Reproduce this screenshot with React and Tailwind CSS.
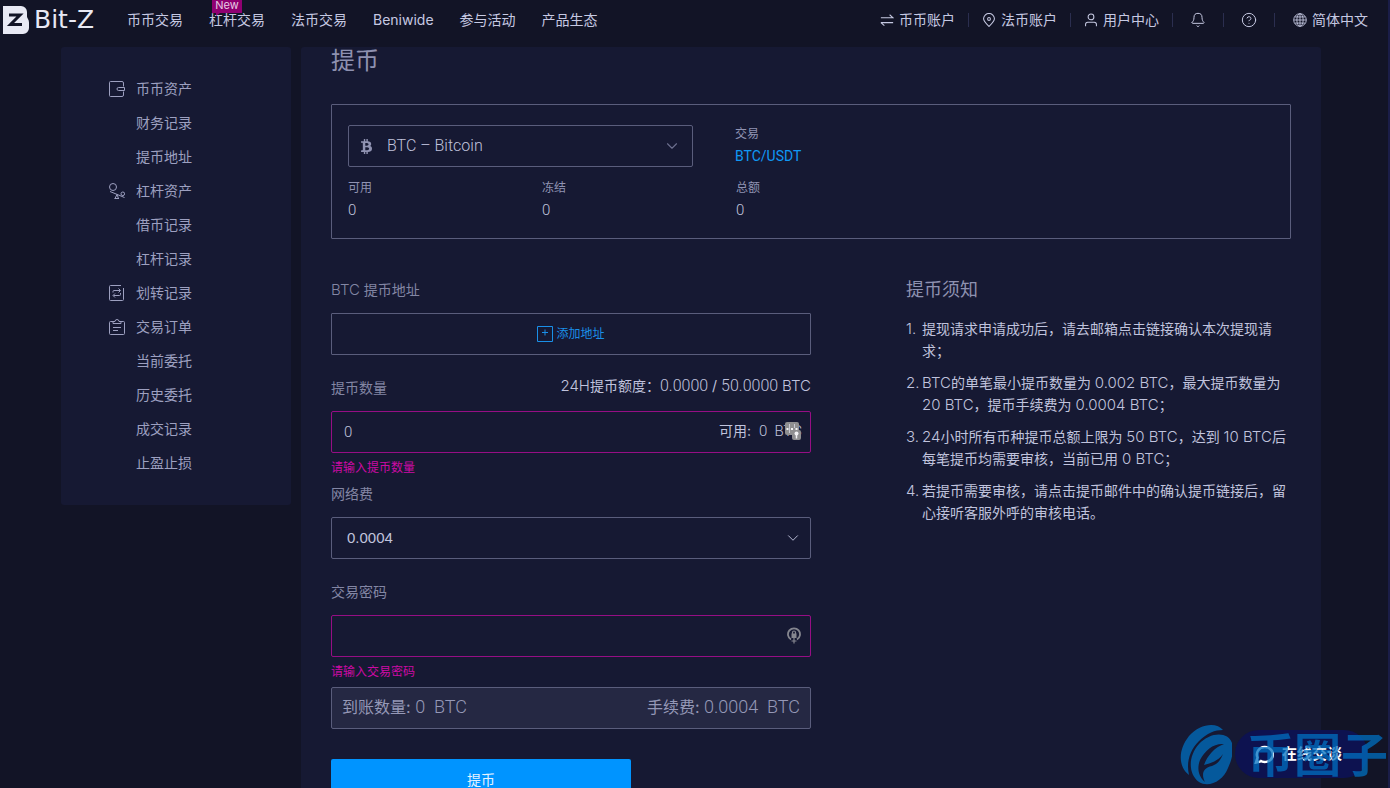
import React, { useState } from 'react';
import { Bell, ChevronDown, CircleQuestionMark } from 'lucide-react';
import { FaBtc } from 'react-icons/fa';

const NAV_LINKS = [
  { label: '币币交易' },
  { label: '杠杆交易', badge: 'New' },
  { label: '法币交易' },
  { label: 'Beniwide' },
  { label: '参与活动' },
  { label: '产品生态' },
];

const SIDE_LINKS = [
  { label: '币币资产', icon: WalletIcon },
  { label: '财务记录' },
  { label: '提币地址' },
  { label: '杠杆资产', icon: LeverIcon },
  { label: '借币记录' },
  { label: '杠杆记录' },
  { label: '划转记录', icon: TransferIcon },
  { label: '交易订单', icon: OrderIcon },
  { label: '当前委托' },
  { label: '历史委托' },
  { label: '成交记录' },
  { label: '止盈止损' },
];

const NOTES = [
  '提现请求申请成功后，请去邮箱点击链接确认本次提现请求；',
  'BTC的单笔最小提币数量为 0.002 BTC，最大提币数量为 20 BTC，提币手续费为 0.0004 BTC；',
  '24小时所有币种提币总额上限为 50 BTC，达到 10 BTC后每笔提币均需要审核，当前已用 0 BTC；',
  '若提币需要审核，请点击提币邮件中的确认提币链接后，留心接听客服外呼的审核电话。',
];

const NUMERIC = "font-light font-['Roboto','Noto_Sans_CJK_SC',sans-serif]";

// Latin runs are set lighter and one pixel larger than the Chinese text around them
function Mixed({ children }) {
  return children.split(/([A-Za-z0-9][A-Za-z0-9. ]*[A-Za-z0-9.]|[0-9])/).map((part, i) =>
    i % 2 ? <span key={i} className="text-[15px] font-light">{part}</span> : part
  );
}

function Icon({ size = 16, className = '', children }) {
  return (
    <svg width={size} height={size} viewBox="0 0 16 16" fill="none" stroke="currentColor" strokeWidth="1" className={`shrink-0 ${className}`} aria-hidden="true">
      {children}
    </svg>
  );
}

function WalletIcon() {
  return (
    <Icon>
      <path d="M14.5 5.5V2a1.5 1.5 0 0 0-1.5-1.5H1.5a1 1 0 0 0-1 1v13a1 1 0 0 0 1 1H13a1.5 1.5 0 0 0 1.500-1.500V10.500" />
      <path d="M9.500 6.500H15.500V9.500H9.500A1.500 1.500 0 0 1 9.500 6.500Z" />
    </Icon>
  );
}

function LeverIcon() {
  return (
    <Icon>
      <circle cx="4" cy="4" r="3.500" />
      <circle cx="13.800" cy="10.800" r="1.800" />
      <path d="M1 8.500 15.500 14.500M8 11.500 6 15.500M8 11.500 9.500 15.500M5.500 15.500H10" />
    </Icon>
  );
}

function TransferIcon() {
  return (
    <Icon>
      <path d="M12 .5H1.500a1 1 0 0 0-1 1v13a1 1 0 0 0 1 1h12a1 1 0 0 0 1-1V3" />
      <path d="M4 7.500V6.500a1 1 0 0 1 1-1h6M9.500 3.500l2 2-2 2M11.500 8v1.500a1 1 0 0 1-1 1H4.500M6 8.500l-2 2 2 2" />
    </Icon>
  );
}

function OrderIcon() {
  return (
    <Icon>
      <path d="M4 2.500H1.500a1 1 0 0 0-1 1v11a1 1 0 0 0 1 1h13a1 1 0 0 0 1-1v-11a1 1 0 0 0-1-1H12" />
      <path d="M4 4.500v-2h2a2 2 0 0 1 4 0h2v2ZM4 8.500h8M4 11.500h5" />
    </Icon>
  );
}

function SwapIcon() {
  return (
    <Icon size={14}>
      <path strokeWidth="1.200" d="M1 5.500H15L11 2M1 11H15M1 11l4 3.500" />
    </Icon>
  );
}

function PinIcon() {
  return (
    <Icon size={14}>
      <path strokeWidth="1.200" d="M8 15.300C4 11.500 1.800 9.500 1.800 6.700a6.200 6.200 0 0 1 12.400 0c0 2.800-2.200 4.800-6.200 8.600Z" />
      <circle cx="8" cy="6.800" r="1.600" strokeWidth="1.200" />
    </Icon>
  );
}

function UserIcon() {
  return (
    <Icon size={14}>
      <circle cx="8" cy="4.500" r="3.300" strokeWidth="1.200" />
      <path strokeWidth="1.200" d="M1.800 15v-2a2.500 2.500 0 0 1 2.500-2.500h7.400a2.500 2.500 0 0 1 2.500 2.500v2" />
    </Icon>
  );
}

function GlobeIcon() {
  return (
    <Icon size={14}>
      <circle cx="8" cy="8" r="7.200" />
      <ellipse cx="8" cy="8" rx="3.600" ry="7.200" />
      <path d="M8 1v14M1 8h14M2 4.500h12M2 11.500h12" />
    </Icon>
  );
}

function Logo() {
  return (
    <a href="#" className="flex items-center gap-[5px] text-[#e8e9f4]" aria-label="Bit-Z">
      <svg width="26" height="28" viewBox="0 0 26 28" aria-hidden="true">
        <path fill="currentColor" d="M0 0H18a6 6 0 0 1 6 6v4.500c0 1.500 2 3 2 6V22a6 6 0 0 1-6 6H0Z" />
        <path fill="none" stroke="#121426" strokeWidth="3" d="M6 9H17L7.500 18.500H19" />
      </svg>
      <span className="text-[25px] leading-[28px] font-['DejaVu_Sans',sans-serif]">Bit-Z</span>
    </a>
  );
}

function Divider() {
  return <span className="w-px h-[14px] bg-[#2b2e4f]" />;
}

function Header() {
  return (
    <header className="h-[47px] pb-[7px] pl-[3px] pr-5 flex items-center text-[#c6c9e2]">
      <div className="w-[124px]">
        <Logo />
      </div>
      <nav className="flex items-center gap-[26px]">
        {NAV_LINKS.map((link) => (
          <a key={link.label} href="#" className="relative whitespace-nowrap">
            {link.label}
            {link.badge && (
              <span className="absolute -top-[10px] left-[3px] h-[13px] w-[30px] bg-[#8f0071] text-center text-[11px] leading-[11px] text-[#e7cbe4]">
                {link.badge}
                <span className="absolute left-[4px] top-full border-t-[3px] border-r-[4px] border-t-[#8f0071] border-r-transparent" />
              </span>
            )}
          </a>
        ))}
      </nav>
      <div className="ml-auto flex items-center whitespace-nowrap">
        <a href="#" className="flex items-center gap-[5px] px-[13px]"><SwapIcon />币币账户</a>
        <Divider />
        <a href="#" className="flex items-center gap-[5px] px-[13px]"><PinIcon />法币账户</a>
        <Divider />
        <a href="#" className="flex items-center gap-[5px] px-[13px]"><UserIcon />用户中心</a>
        <Divider />
        <button type="button" aria-label="消息" className="px-[17px]"><Bell size={16} strokeWidth={1.5} /></button>
        <Divider />
        <button type="button" aria-label="帮助" className="px-[17px]"><CircleQuestionMark size={16} strokeWidth={1.5} /></button>
        <Divider />
        <a href="#" className="flex items-center gap-[5px] pl-[18px]"><GlobeIcon />简体中文</a>
      </div>
    </header>
  );
}

function Sidebar() {
  return (
    <aside className="w-[230px] shrink-0 rounded-[3px] bg-[#161933] py-[25px] pl-[48px] text-[#9da0c0]">
      {SIDE_LINKS.map(({ label, icon: LinkIcon }) => (
        <a key={label} href="#" className="flex h-[34px] items-center gap-[11px]">
          <span className="w-4">{LinkIcon && <LinkIcon />}</span>
          {label}
        </a>
      ))}
    </aside>
  );
}

function Stat({ label, value }) {
  return (
    <div className="w-[194px]">
      <div className="text-xs leading-[22px] text-[#9093b2]">{label}</div>
      <div className={`text-[15px] leading-[22px] ${NUMERIC}`}>{value}</div>
    </div>
  );
}

function CoinCard() {
  return (
    <section className="rounded-[1px] border border-[#5a5d7c] px-4 pt-[18px] pb-[17px]">
      <div className="flex items-end gap-[42px]">
        <div className="relative w-[345px]">
          <FaBtc size={15} className="absolute left-[11px] top-[14px] text-[#9093b2]" />
          <select aria-label="币种" className={`block h-[42px] w-full appearance-none rounded-[2px] border border-[#5a5d7c] bg-transparent pl-[38px] pr-10 text-base ${NUMERIC}`}>
            <option>BTC – Bitcoin</option>
          </select>
          <ChevronDown size={18} strokeWidth={1.5} className="pointer-events-none absolute right-[12px] top-[12px] text-[#6c6f8e]" />
        </div>
        <div>
          <div className="text-xs leading-[22px] text-[#9093b2]">交易</div>
          <a href="#" className="block font-['Roboto',sans-serif] leading-[22px] text-[#1098f5]">BTC/USDT</a>
        </div>
      </div>
      <div className="mt-[10px] flex">
        <Stat label="可用" value="0" />
        <Stat label="冻结" value="0" />
        <Stat label="总额" value="0" />
      </div>
    </section>
  );
}

function FieldLabel({ htmlFor, children }) {
  return <label htmlFor={htmlFor} className="block leading-[22px] text-[#8386a4]"><Mixed>{children}</Mixed></label>;
}

function FieldError({ children }) {
  return <p className="my-1 text-xs leading-[22px] text-[#cc0aa4]">{children}</p>;
}

// Badges that a password manager puts into the text boxes
function KeypadBadge() {
  return (
    <svg width="17" height="19" viewBox="0 0 17 19" className="absolute right-[9px] top-[11px]" aria-hidden="true">
      <rect x="0" y="0" width="14" height="13" rx="2" fill="#8f8f91" />
      <rect x="7" y="8" width="9" height="10" rx="2" fill="#8f8f91" />
      <path d="M1.500 7h2M6 7h2M10.500 7h2" stroke="#f2f2f4" strokeWidth="2" />
      <path d="M4.500 2v9M9.500 2v4" stroke="#c9c9d2" strokeWidth="1" />
      <circle cx="11.500" cy="11.500" r="2" fill="#f2f2f4" />
      <path d="M11.500 12v4.500" stroke="#f2f2f4" strokeWidth="1.500" />
    </svg>
  );
}

function LockBadge() {
  return (
    <svg width="14" height="17" viewBox="0 0 14 17" fill="none" stroke="#85868f" className="absolute right-[10px] top-[12px]" aria-hidden="true">
      <path strokeWidth="1.800" d="M4 12.500A6 6 0 1 1 10 12.500" />
      <rect x="4.500" y="6.500" width="5" height="4.500" fill="#85868f" stroke="none" />
      <path strokeWidth="1.200" d="M5.500 7V5.500a1.500 1.500 0 0 1 3 0V7M7 11v5.500M4.500 14h5" />
    </svg>
  );
}

function WithdrawForm() {
  const [amount, setAmount] = useState('0');
  const [password, setPassword] = useState('');

  return (
    <form className="w-[480px]" onSubmit={(e) => e.preventDefault()}>
      <FieldLabel htmlFor="address">BTC 提币地址</FieldLabel>
      <button id="address" type="button" className="mt-3 mb-[22px] flex h-[42px] w-full items-center justify-center gap-[3px] rounded-[1px] border border-[#5a5d7c] text-xs text-[#1a8fe8]">
        <svg width="16" height="16" viewBox="0 0 16 16" fill="none" stroke="currentColor" aria-hidden="true">
          <path d="M.5.5h15v15H.5ZM8 3.500v6M5 6.500h6" />
        </svg>
        添加地址
      </button>

      <div className="flex justify-between">
        <FieldLabel htmlFor="amount">提币数量</FieldLabel>
        <span className="leading-[18px]">
          <Mixed>24H提币额度：</Mixed>
          <span className={`text-base leading-[18px] ${NUMERIC}`}>0.0000</span> / <span className={`text-base leading-[18px] ${NUMERIC}`}>50.0000</span> <Mixed>BTC</Mixed>
        </span>
      </div>
      <div className="relative mt-3">
        <input
          id="amount"
          value={amount}
          onChange={(e) => setAmount(e.target.value)}
          className={`block h-[42px] w-full rounded-[2px] border border-[#960e85] bg-transparent pl-3 pr-[110px] text-[15px] outline-none ${NUMERIC}`}
        />
        <span className="absolute right-[9px] top-[9px] leading-[22px]">
          可用: <span className={`ml-1 text-[15px] ${NUMERIC}`}>0&nbsp; BTC</span>
        </span>
        <KeypadBadge />
      </div>
      <FieldError>请输入提币数量</FieldError>

      <FieldLabel htmlFor="fee">网络费</FieldLabel>
      <div className="relative mt-3 mb-[22px]">
        <select id="fee" className="block h-[42px] w-full appearance-none rounded-[2px] border border-[#5a5d7c] bg-transparent pl-[15px] font-['Liberation_Sans',sans-serif] text-[15px]">
          <option>0.0004</option>
        </select>
        <ChevronDown size={18} strokeWidth={1.25} className="pointer-events-none absolute right-[9px] top-[12px]" />
      </div>

      <FieldLabel htmlFor="password">交易密码</FieldLabel>
      <div className="relative mt-3">
        <input
          id="password"
          type="password"
          value={password}
          onChange={(e) => setPassword(e.target.value)}
          className="block h-[42px] w-full rounded-[2px] border border-[#960e85] bg-transparent px-3 outline-none"
        />
        <LockBadge />
      </div>
      <FieldError>请输入交易密码</FieldError>

      <div className="flex h-[42px] items-center justify-between rounded-[2px] border border-[#5a5d7c] bg-[#252843] px-[10px] pb-[2px] text-base text-[#9598b7]">
        <span>到账数量: <span className={`text-lg ${NUMERIC}`}>0&nbsp; BTC</span></span>
        <span>手续费: <span className={`text-lg ${NUMERIC}`}>0.0004&nbsp; BTC</span></span>
      </div>

      <button type="submit" className="mt-[30px] h-[42px] w-[300px] rounded-[2px] bg-[#0094ff] text-[#e6f2ff]">提币</button>
    </form>
  );
}

function Notes() {
  return (
    <section className="min-w-0 flex-1">
      <h2 className="text-lg leading-[22px] text-[#8e91b0]">提币须知</h2>
      <ol className="mt-[17px] flex flex-col gap-[10px]">
        {NOTES.map((note, i) => (
          <li key={i} className="flex leading-[22px]">
            <span className="w-4 shrink-0 text-[15px] font-light">{i + 1}.</span>
            <span><Mixed>{note}</Mixed></span>
          </li>
        ))}
      </ol>
    </section>
  );
}

function Watermark() {
  return (
    <div className="pointer-events-none fixed right-[2px] bottom-0 flex h-[66px] items-center gap-[15px] text-[#006fc0] opacity-75" aria-hidden="true">
      <svg width="52" height="62" viewBox="0 0 52 62" fill="currentColor">
        <path d="M43 6C37-2 20-1 9 12-2 26-2 42 9 51 6 38 10 26 19 17 27 9 35 6 43 6Z" />
        <path fillRule="evenodd" d="M52 19C48 7 30 8 19 20 8 32 8 50 19 58 29 64 43 57 48 44 52 35 54 27 52 19ZM44 20C34 19 25 26 20 36 17 44 18 52 25 58 21 50 23 44 32 42 38 40 41 35 43 30 38 37 31 39 24 41 27 32 35 23 44 20Z" />
      </svg>
      <span className="text-[47px] leading-[60px] font-bold">币圈子</span>
    </div>
  );
}

function ChatButton() {
  return (
    <button type="button" className="fixed right-[22px] bottom-[10px] flex h-[48px] w-[133px] items-center gap-[8px] rounded-full bg-[#0d1250] pl-[19px] font-bold text-white">
      <svg width="20" height="20" viewBox="0 0 20 20" fill="none" stroke="currentColor" strokeWidth="2.500" aria-hidden="true">
        <path d="M6 16.500A8 7.500 0 1 0 3.500 13.500L2 18.500 6.500 17.500" />
      </svg>
      <span className="text-[15px]">在线交谈</span>
    </button>
  );
}

export default function App() {
  return (
    <div className="h-screen overflow-hidden border-r-2 border-[#1a1d48] bg-[#121426] text-sm text-[#c0c3dd] font-['Inter','Noto_Sans_CJK_SC',sans-serif]">
      <Header />
      <div className="pr-[6px]">
        <div className="mx-auto flex max-w-[1260px] items-start gap-[10px]">
          <Sidebar />
          <main className="min-w-0 flex-1 rounded-t-[3px] bg-[#161933] px-[30px] pb-10">
            <h1 className="mb-[29px] text-2xl leading-[28px] text-[#8e91b0]">提币</h1>
            <CoinCard />
            <div className="mt-10 flex gap-[95px]">
              <WithdrawForm />
              <Notes />
            </div>
          </main>
        </div>
      </div>
      <ChatButton />
      <Watermark />
    </div>
  );
}
